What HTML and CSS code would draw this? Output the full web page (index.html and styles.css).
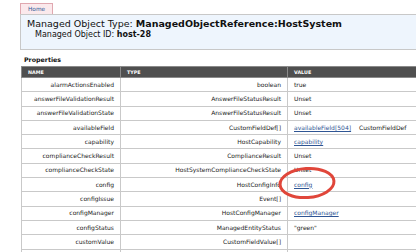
FILE: index.html
```html
<!DOCTYPE html>
<html>
<head>
<meta charset="utf-8">
<link rel="stylesheet" href="styles.css">
</head>
<body>
<div class="page">
  <div class="tabs"><a class="tab" href="#">Home</a></div>
  <div class="header">
    <div class="title">Managed Object Type: <b>ManagedObjectReference:HostSystem</b></div>
    <div class="oid">Managed Object ID: <b>host-28</b></div>
  </div>
  <div class="section">Properties</div>
  <table class="props">
    <colgroup><col class="c-name"><col class="c-type"><col class="c-value"></colgroup>
    <thead>
      <tr><th class="h-name">NAME</th><th class="h-type">TYPE</th><th class="h-value">VALUE</th></tr>
    </thead>
    <tbody>
      <tr><td class="n">alarmActionsEnabled</td><td class="t">boolean</td><td class="v">true</td></tr>
      <tr><td class="n">answerFileValidationResult</td><td class="t">AnswerFileStatusResult</td><td class="v">Unset</td></tr>
      <tr><td class="n">answerFileValidationState</td><td class="t">AnswerFileStatusResult</td><td class="v">Unset</td></tr>
      <tr><td class="n">availableField</td><td class="t">CustomFieldDef[]</td><td class="v"><a href="#">availableField[504]</a><span class="gap">CustomFieldDef</span></td></tr>
      <tr><td class="n">capability</td><td class="t">HostCapability</td><td class="v"><a href="#">capability</a></td></tr>
      <tr><td class="n">complianceCheckResult</td><td class="t">ComplianceResult</td><td class="v">Unset</td></tr>
      <tr><td class="n">complianceCheckState</td><td class="t">HostSystemComplianceCheckState</td><td class="v">Unset</td></tr>
      <tr><td class="n">config</td><td class="t">HostConfigInfo</td><td class="v"><a href="#">config</a></td></tr>
      <tr><td class="n">configIssue</td><td class="t">Event[]</td><td class="v"></td></tr>
      <tr><td class="n">configManager</td><td class="t">HostConfigManager</td><td class="v"><a href="#">configManager</a></td></tr>
      <tr><td class="n">configStatus</td><td class="t">ManagedEntityStatus</td><td class="v">"green"</td></tr>
      <tr><td class="n">customValue</td><td class="t">CustomFieldValue[]</td><td class="v"></td></tr>
      <tr><td class="n">datastore</td><td class="t">ManagedObjectReference:Datastore[]</td><td class="v"><a href="#">datastore-11</a> (ISCSI_Storage)</td></tr>
    </tbody>
  </table>
  <svg class="mark" width="60" height="34" viewBox="0 0 60 34"><ellipse cx="30" cy="17" rx="27" ry="14.5" fill="none" stroke="#e0463a" stroke-width="3" transform="rotate(-4 30 17)"/></svg>
</div>
</body>
</html>
```
FILE: styles.css
```css
html, body {
  margin: 0;
  padding: 0;
  overflow: hidden;
  background: #fff;
}
body {
  font-family: "DejaVu Sans", Verdana, sans-serif;
  color: #1a1a1a;
}
.page {
  position: relative;
  width: 520px;
  padding: 3px 0 0 20px;
}
.tabs {
  display: flex;
  height: 11px;
}
.tab {
  display: block;
  box-sizing: border-box;
  width: 33px;
  height: 11px;
  padding-left: 7px;
  background: #fbe9ec;
  border: 1px solid #e0a8b0;
  border-bottom: none;
  font-size: 5.8px;
  line-height: 10px;
  color: #2d5a99;
  text-decoration: none;
}
.header {
  box-sizing: border-box;
  height: 36px;
  background: #eef5fd;
  border: 1px solid #c8c8c8;
  border-right: none;
  padding: 3px 0 0 6px;
}
.title {
  font-size: 9.5px;
  line-height: 12px;
  color: #111;
}
.oid {
  font-size: 8px;
  line-height: 10px;
  padding-left: 8px;
  color: #111;
}
.section {
  font-size: 6.3px;
  font-weight: bold;
  line-height: 8px;
  padding: 6px 0 0 4px;
  height: 10px;
  color: #111;
}
.props {
  border-collapse: collapse;
  table-layout: fixed;
  width: 480px;
  margin-left: 1px;
  font-size: 6px;
}
.c-name { width: 99px; }
.c-type { width: 167px; }
.c-value { width: 214px; }
.props th {
  background: #4f4f4f;
  color: #fff;
  font-size: 4.8px;
  font-weight: bold;
  text-align: left;
  height: 11px;
  padding: 0 0 0 6px;
  border-top: 1px solid #8a8a8a;
  border-bottom: 1px solid #8a8a8a;
  border-left: 1px solid #8a8a8a;
  line-height: 9px;
  box-sizing: border-box;
}
.props td {
  border: 1px solid #c9c9c9;
  height: 14.3px;
  box-sizing: border-box;
  line-height: 12px;
  padding: 0 6px;
  white-space: nowrap;
  overflow: hidden;
  color: #222;
}
.props td.n, .props td.t {
  text-align: right;
}
.props td.v {
  text-align: left;
  padding-left: 6px;
}
.props a {
  color: #2f5594;
  text-decoration: underline;
}
.gap {
  margin-left: 8px;
}
.mark {
  position: absolute;
  left: 277px;
  top: 166px;
}
```
